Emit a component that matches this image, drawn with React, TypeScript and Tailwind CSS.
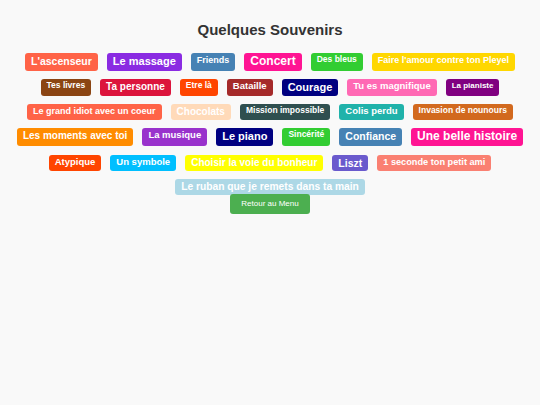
import React from "react";

type Tag = { t: string; bg: string; fs: string };

const rows: Tag[][] = [
  [
    { t: "L'ascenseur", bg: "bg-[#ff6347]", fs: "text-[10.5px]" },
    { t: "Le massage", bg: "bg-[#8a2be2]", fs: "text-[11px]" },
    { t: "Friends", bg: "bg-[#4682b4]", fs: "text-[9px]" },
    { t: "Concert", bg: "bg-[#ff1493]", fs: "text-[12px]" },
    { t: "Des bleus", bg: "bg-[#32cd32]", fs: "text-[8.5px]" },
    { t: "Faire l'amour contre ton Pleyel", bg: "bg-[#ffd700]", fs: "text-[9px]" },
  ],
  [
    { t: "Tes livres", bg: "bg-[#8b4513]", fs: "text-[8.5px]" },
    { t: "Ta personne", bg: "bg-[#dc143c]", fs: "text-[10px]" },
    { t: "Etre là", bg: "bg-[#ff4500]", fs: "text-[8.5px]" },
    { t: "Bataille", bg: "bg-[#a52a2a]", fs: "text-[9.5px]" },
    { t: "Courage", bg: "bg-[#000080]", fs: "text-[11px]" },
    { t: "Tu es magnifique", bg: "bg-[#ff69b4]", fs: "text-[9.5px]" },
    { t: "La pianiste", bg: "bg-[#800080]", fs: "text-[8px]" },
  ],
  [
    { t: "Le grand idiot avec un coeur", bg: "bg-[#ff6347]", fs: "text-[9px]" },
    { t: "Chocolats", bg: "bg-[#ffdab9]", fs: "text-[10px]" },
    { t: "Mission impossible", bg: "bg-[#2f4f4f]", fs: "text-[8.5px]" },
    { t: "Colis perdu", bg: "bg-[#20b2aa]", fs: "text-[9.5px]" },
    { t: "Invasion de nounours", bg: "bg-[#d2691e]", fs: "text-[8.5px]" },
  ],
  [
    { t: "Les moments avec toi", bg: "bg-[#ff8c00]", fs: "text-[10px]" },
    { t: "La musique", bg: "bg-[#9932cc]", fs: "text-[9.5px]" },
    { t: "Le piano", bg: "bg-[#000080]", fs: "text-[11px]" },
    { t: "Sincérité", bg: "bg-[#32cd32]", fs: "text-[8.5px]" },
    { t: "Confiance", bg: "bg-[#4682b4]", fs: "text-[10.5px]" },
    { t: "Une belle histoire", bg: "bg-[#ff1493]", fs: "text-[12px]" },
  ],
  [
    { t: "Atypique", bg: "bg-[#ff4500]", fs: "text-[9.5px]" },
    { t: "Un symbole", bg: "bg-[#00bfff]", fs: "text-[9.5px]" },
    { t: "Choisir la voie du bonheur", bg: "bg-[#ffff00]", fs: "text-[10px]" },
    { t: "Liszt", bg: "bg-[#6a5acd]", fs: "text-[10.5px]" },
    { t: "1 seconde ton petit ami", bg: "bg-[#fa8072]", fs: "text-[9.2px]" },
  ],
  [{ t: "Le ruban que je remets dans ta main", bg: "bg-[#add8e6]", fs: "text-[10.25px]" }],
];

export default function App() {
  return (
    <div className="min-h-[405px] w-[540px] bg-[#f9f9f9] font-['Liberation_Sans',Arial,sans-serif] flex flex-col items-center">
      <h1 className="mt-[21px] text-[15px] font-bold text-[#333333] leading-[18px]">Quelques Souvenirs</h1>
      <div className="mt-[14px] flex flex-col gap-[8.5px] items-center">
        {rows.map((row, i) => (
          <div key={i} className="flex justify-center gap-[9px]">
            {row.map((tag) => (
              <span
                key={tag.t}
                className={`${tag.bg} ${tag.fs} text-white font-bold rounded-[3px] px-[6px] pt-[2px] pb-[2px] leading-[1.15] whitespace-nowrap`}
              >
                {tag.t}
              </span>
            ))}
          </div>
        ))}
      </div>
      <button className="mt-[-1.5px] bg-[#4caf50] text-white text-[8px] rounded-[3px] w-[80px] h-[20px] leading-[20px]">
        Retour au Menu
      </button>
    </div>
  );
}
